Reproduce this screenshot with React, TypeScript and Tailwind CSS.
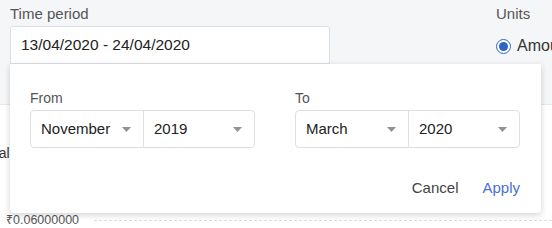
import React from "react";

function Caret() {
  return (
    <svg width="9" height="5" viewBox="0 0 9 5" className="shrink-0">
      <path d="M0 0 L9 0 L4.5 5 Z" fill="#8e9299" />
    </svg>
  );
}

type SelectProps = { month: string; year: string };

function MonthYear({ month, year }: SelectProps) {
  return (
    <div className="flex h-[38px] w-[225px] rounded-[4px] border border-[#dcdfe5] bg-white text-[15px] text-[#222]">
      <div className="flex w-[113px] items-center justify-between border-r border-[#dcdfe5] pl-[10px] pr-[12px]">
        <span>{month}</span>
        <Caret />
      </div>
      <div className="flex flex-1 items-center justify-between pl-[10px] pr-[12px]">
        <span>{year}</span>
        <Caret />
      </div>
    </div>
  );
}

export default function App() {
  return (
    <div
      className="relative h-[228px] w-[552px] overflow-hidden bg-white"
      style={{ fontFamily: '"Liberation Sans", Arial, sans-serif' }}
    >
      {/* top filters */}
      <div className="flex h-[105px] border-b border-[#e6e8ec] bg-[#f5f6f8] pl-[10px]">
        <div className="flex flex-col">
          <div className="mt-[5px] text-[15px] leading-[18px] text-[#555]">Time period</div>
          <div className="mt-[3px] flex h-[38px] w-[320px] items-center rounded-t-[3px] border border-[#dcdfe5] bg-white pl-[10px] text-[15.5px] text-[#222]">
            13/04/2020 - 24/04/2020
          </div>
        </div>
        <div className="ml-[166px] flex flex-col">
          <div className="mt-[5px] text-[15px] leading-[18px] text-[#555]">Units</div>
          <div className="mt-[11px] flex items-center gap-[6px] whitespace-nowrap text-[16px] text-[#333]">
            <span className="flex h-[15px] w-[15px] items-center justify-center rounded-full border-[1.5px] border-[#2f64c6] bg-white">
              <span className="h-[9px] w-[9px] rounded-full bg-[#2f64c6]" />
            </span>
            Amount
          </div>
        </div>
      </div>

      {/* background content */}
      <div className="relative h-[123px]">
        <div className="absolute left-[-20px] top-[38px] text-[14px] text-[#333]">Total</div>
        <div className="absolute bottom-[-2px] left-[6px] flex w-[546px] items-center gap-[15px]">
          <span className="text-[12.5px] text-[#555]">₹0.06000000</span>
          <span className="flex-1 border-t border-dashed border-[#dadde2]" />
        </div>
      </div>

      {/* date popover */}
      <div className="absolute left-[10px] top-[64px] w-[531px] rounded-b-[4px] bg-white px-[20px] pb-[16px] pt-[26px] shadow-[0_2px_6px_rgba(0,0,0,0.18)]">
        <div className="flex gap-[40px]">
          <div>
            <div className="mb-[4px] text-[14px] leading-[16px] text-[#555]">From</div>
            <MonthYear month="November" year="2019" />
          </div>
          <div>
            <div className="mb-[4px] text-[14px] leading-[16px] text-[#555]">To</div>
            <MonthYear month="March" year="2020" />
          </div>
        </div>
        <div className="mt-[31px] flex justify-end gap-[24px] pr-[1px] text-[15px] leading-[18px]">
          <button className="text-[#444]">Cancel</button>
          <button className="text-[#4a6fd8]">Apply</button>
        </div>
      </div>
    </div>
  );
}
